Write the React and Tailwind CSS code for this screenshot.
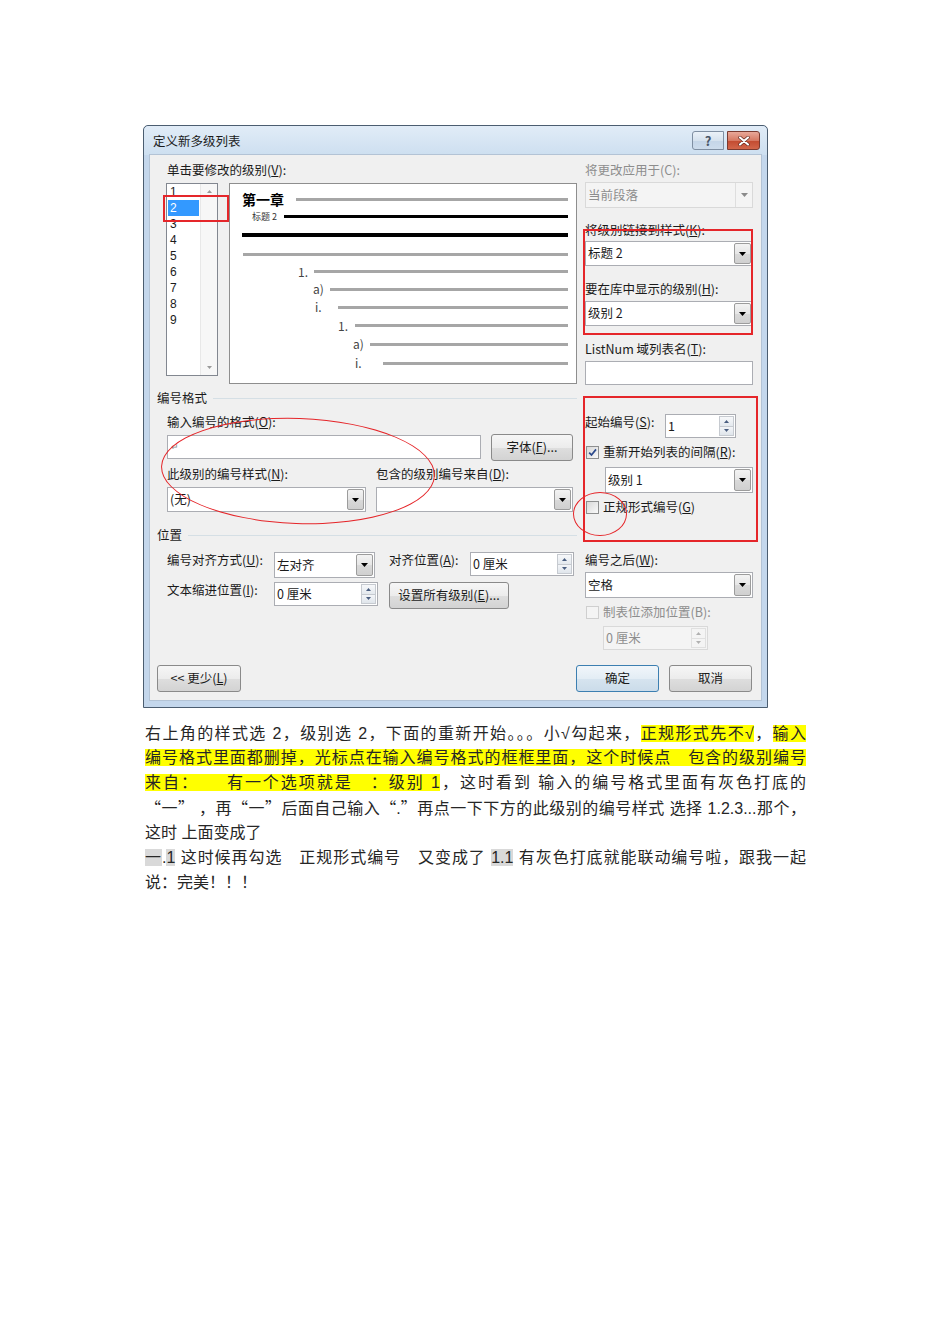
import React from 'react';

// 7-style dialog widgets
const DownArrow = ({ color = '#000' }) => (
  <svg width="7" height="4" viewBox="0 0 7 4">
    <path d="M0 0h7L3.5 4z" fill={color} />
  </svg>
);

const Tiny = ({ up, color = '#4a5e80' }) => (
  <svg width="5" height="3" viewBox="0 0 5 3">
    <path d={up ? 'M0 3h5L2.5 0z' : 'M0 0h5L2.5 3z'} fill={color} />
  </svg>
);

const Combo = ({ text, className = '', disabled = false }) => (
  <div
    className={`flex items-stretch border ${
      disabled ? 'border-[#d9d9d9] bg-[#f4f4f4] text-[#8d8d8d]' : 'border-[#abadb3] bg-white text-[#1b1b1b]'
    } ${className}`}
  >
    <div className="flex flex-1 items-center pl-[2px]">{text}</div>
    {disabled ? (
      <div className="flex w-[17px] items-center justify-center border-l border-[#dedede]">
        <DownArrow color="#8a8a8a" />
      </div>
    ) : (
      <div className="m-px flex w-[17px] items-center justify-center rounded-[2px] border border-[#9c9c9c] bg-[linear-gradient(#f3f3f3,#e6e6e6_50%,#d9d9d9_51%,#d0d0d0)]">
        <DownArrow />
      </div>
    )}
  </div>
);

const Spin = ({ text, className = '', disabled = false }) => (
  <div
    className={`flex border ${
      disabled ? 'border-[#d9d9d9] bg-[#f4f4f4] text-[#8d8d8d]' : 'border-[#abadb3] bg-white text-[#1b1b1b]'
    } ${className}`}
  >
    <div className="flex flex-1 items-center pl-[2px]">{text}</div>
    <div className="my-px mr-px flex w-[15px] flex-col">
      <div
        className={`flex flex-1 items-center justify-center border ${
          disabled ? 'border-[#e0e0e0] bg-[#f4f4f4]' : 'border-[#c6cad0] bg-[linear-gradient(#f7f8fa,#e4e9ee)]'
        }`}
      >
        <Tiny up color={disabled ? '#b0b0b0' : '#4a5e80'} />
      </div>
      <div
        className={`flex flex-1 items-center justify-center border border-t-0 ${
          disabled ? 'border-[#e0e0e0] bg-[#f4f4f4]' : 'border-[#c6cad0] bg-[linear-gradient(#f3f5f8,#dfe5eb)]'
        }`}
      >
        <Tiny color={disabled ? '#b0b0b0' : '#4a5e80'} />
      </div>
    </div>
  </div>
);

const Btn = ({ children, className = '', primary = false }) => (
  <div
    className={`flex items-center justify-center rounded-[3px] border ${
      primary
        ? 'border-[#3c7fb1] bg-[linear-gradient(#f1f6fa,#e3edf5_50%,#d6e4ef_51%,#cbdcea)]'
        : 'border-[#8a8a8a] bg-[linear-gradient(#f6f6f6,#ececec_50%,#dedede_51%,#d3d3d3)]'
    } ${className}`}
  >
    {children}
  </div>
);

const Check = ({ checked = false, disabled = false }) => (
  <div
    className={`flex h-[13px] w-[13px] items-center justify-center border ${
      disabled ? 'border-[#cfcfcf] bg-[#f4f4f4]' : 'border-[#8e8f8f] bg-[linear-gradient(135deg,#d8d8d8,#f9f9f9)]'
    }`}
  >
    {checked && (
      <svg width="9" height="9" viewBox="0 0 9 9">
        <path d="M1.2 4.6l2.3 2.4L8 1.4" stroke="#2c4a8c" strokeWidth="1.7" fill="none" />
      </svg>
    )}
  </div>
);

const Heading = ({ children }) => (
  <div className="flex h-[16px] items-center">
    <span className="leading-[16px]">{children}</span>
    <div className="ml-[6px] h-px flex-1 bg-[#d5dfe5]" />
  </div>
);

const preview = [
  { h: 'h-[16px]', pl: 'pl-[12px]', w: 'w-[54px]', label: '第一章', lc: 'text-[14px] font-bold text-black', bar: 'h-[3px] bg-[#a6a6a6]' },
  { h: 'h-[18px]', pl: 'pl-[22px]', w: 'w-[32px]', label: '标题 2', lc: 'text-[9px] text-[#333]', bar: 'h-[3px] bg-black' },
  { h: 'h-[20px]', pl: 'pl-[12px]', w: '', label: '', lc: '', bar: 'h-[4px] bg-black' },
  { h: 'h-[18px]', pl: 'pl-[13px]', w: '', label: '', lc: '', bar: 'h-[3px] bg-[#a6a6a6]' },
  { h: 'h-[17px]', pl: 'pl-[68px]', w: 'w-[16px]', label: '1.', lc: 'text-[12px] text-[#444]', bar: 'h-[3px] bg-[#a6a6a6]' },
  { h: 'h-[18px]', pl: 'pl-[83px]', w: 'w-[17px]', label: 'a)', lc: 'text-[12px] text-[#444]', bar: 'h-[3px] bg-[#a6a6a6]' },
  { h: 'h-[18px]', pl: 'pl-[85px]', w: 'w-[23px]', label: 'i.', lc: 'text-[12px] text-[#444]', bar: 'h-[3px] bg-[#a6a6a6]' },
  { h: 'h-[19px]', pl: 'pl-[108px]', w: 'w-[17px]', label: '1.', lc: 'text-[12px] text-[#444]', bar: 'h-[3px] bg-[#a6a6a6]' },
  { h: 'h-[18px]', pl: 'pl-[123px]', w: 'w-[17px]', label: 'a)', lc: 'text-[12px] text-[#444]', bar: 'h-[3px] bg-[#a6a6a6]' },
  { h: 'h-[20px]', pl: 'pl-[125px]', w: 'w-[28px]', label: 'i.', lc: 'text-[12px] text-[#444]', bar: 'h-[3px] bg-[#a6a6a6]' },
];

const Dialog = () => (
  <div className="relative ml-[143px] w-[625px] rounded-t-[5px] border border-[#4b5d70] bg-[#c4d7ec] pb-[7px] text-[12.5px] text-[#1b1b1b] [font-family:'Noto_Sans_CJK_SC',sans-serif]">
    {/* title bar */}
    <div className="flex h-[29px] items-start justify-between rounded-t-[5px] bg-[linear-gradient(#e1ecf7,#cddff0)]">
      <div className="pl-[9px] pt-[7px] leading-[16px]">定义新多级列表</div>
      <div className="flex pr-[7px] pt-[5px]">
        <div className="flex h-[19px] w-[32px] items-center justify-center rounded-l-[3px] border border-[#7f8fa2] bg-[linear-gradient(#eaf1f8,#d6e2ee_50%,#c4d5e7_51%,#cddcec)] text-[13px] font-bold leading-none text-[#4a5668]">
          ?
        </div>
        <div className="ml-[3px] flex h-[19px] w-[33px] items-center justify-center rounded-r-[3px] border border-[#7a3a30] bg-[linear-gradient(#e9a899,#d67963_50%,#c24a30_51%,#d2664a)]">
          <svg width="12" height="10" viewBox="0 0 12 10">
            <path d="M2 1.5l8 7M10 1.5l-8 7" stroke="#5a2018" strokeWidth="3.4" strokeLinecap="round" />
            <path d="M2 1.5l8 7M10 1.5l-8 7" stroke="#fff" strokeWidth="2.2" strokeLinecap="round" />
          </svg>
        </div>
      </div>
    </div>

    {/* body */}
    <div className="mx-[6px] bg-[#f0f0f0] pb-[8px] shadow-[0_0_0_1px_#b3c3d5]">
      <div className="flex items-start pt-[7px]">
        {/* left column */}
        <div className="w-[427px] pl-[7px]">
          <div className="ml-[10px] h-[16px] leading-[16px]">
            单击要修改的级别(<u>V</u>):
          </div>
          <div className="ml-[9px] mt-[5px] flex items-start">
            <div className="flex h-[193px] w-[52px] border border-[#828790] bg-white">
              <div className="flex-1 text-[12px] [font-family:'Liberation_Sans',sans-serif]">
                {[1, 2, 3, 4, 5, 6, 7, 8, 9].map((n) => (
                  <div
                    key={n}
                    className={`mx-px h-[16px] pl-[2px] leading-[16px] ${n === 2 ? 'bg-[#3399ff] text-white' : ''}`}
                  >
                    {n}
                  </div>
                ))}
              </div>
              <div className="flex w-[17px] flex-col items-center justify-between border-l border-[#e8e8e8] bg-[#f7f7f7] py-[6px]">
                <Tiny up color="#9a9a9a" />
                <Tiny color="#9a9a9a" />
              </div>
            </div>
            <div className="ml-[11px] h-[201px] w-[348px] border border-[#8e8e8e] bg-white pr-[8px] pt-[7px]">
              {preview.map((r, i) => (
                <div key={i} className={`flex items-center ${r.h} ${r.pl}`}>
                  {r.label && <span className={`shrink-0 leading-none ${r.w} ${r.lc}`}>{r.label}</span>}
                  <div className={`flex-1 ${r.bar}`} />
                </div>
              ))}
            </div>
          </div>

          <div className="mt-[6px]">
            <Heading>编号格式</Heading>
          </div>
          <div className="ml-[10px] mt-[8px] h-[16px] leading-[16px]">
            输入编号的格式(<u>O</u>):
          </div>
          <div className="ml-[10px] mt-[4px] flex items-start">
            <div className="mt-px flex h-[24px] w-[314px] items-center border border-[#abadb3] bg-white pl-[3px] text-[9px] text-[#8a8a8a]">
              ↵
            </div>
            <Btn className="ml-[10px] h-[27px] w-[82px]">
              字体(<u>F</u>)...
            </Btn>
          </div>
          <div className="ml-[10px] mt-[5px] flex h-[16px] leading-[16px]">
            <div className="w-[209px]">
              此级别的编号样式(<u>N</u>):
            </div>
            <div>
              包含的级别编号来自(<u>D</u>):
            </div>
          </div>
          <div className="ml-[10px] mt-[5px] flex">
            <Combo text="(无)" className="h-[25px] w-[199px]" />
            <Combo text="" className="ml-[10px] h-[25px] w-[197px]" />
          </div>

          <div className="mt-[15px]">
            <Heading>位置</Heading>
          </div>
          <div className="ml-[10px] mt-[9px] flex items-start">
            <div className="w-[107px] leading-[16px]">
              编号对齐方式(<u>U</u>):
            </div>
            <Combo text="左对齐" className="h-[26px] w-[101px]" />
            <div className="ml-[14px] w-[81px] leading-[16px]">
              对齐位置(<u>A</u>):
            </div>
            <Spin text="0 厘米" className="h-[24px] w-[104px]" />
          </div>
          <div className="ml-[10px] mt-[4px] flex items-start">
            <div className="w-[107px] leading-[16px]">
              文本缩进位置(<u>I</u>):
            </div>
            <Spin text="0 厘米" className="h-[24px] w-[104px]" />
            <Btn className="ml-[11px] h-[27px] w-[120px]">
              设置所有级别(<u>E</u>)...
            </Btn>
          </div>
        </div>

        {/* right column */}
        <div className="ml-[8px] w-[168px]">
          <div className="h-[16px] leading-[16px] text-[#8d8d8d]">将更改应用于(C):</div>
          <Combo disabled text="当前段落" className="mt-[4px] h-[26px]" />
          <div className="mt-[14px] h-[16px] leading-[16px]">
            将级别链接到样式(<u>K</u>):
          </div>
          <Combo text="标题 2" className="mt-[3px] h-[25px]" />
          <div className="mt-[15px] h-[16px] leading-[16px]">
            要在库中显示的级别(<u>H</u>):
          </div>
          <Combo text="级别 2" className="mt-[4px] h-[25px]" />
          <div className="mt-[15px] h-[16px] leading-[16px]">
            ListNum 域列表名(<u>T</u>):
          </div>
          <div className="mt-[4px] h-[24px] border border-[#abadb3] bg-white" />

          <div className="mt-[29px] flex items-start">
            <div className="w-[80px] leading-[16px]">
              起始编号(<u>S</u>):
            </div>
            <Spin text="1" className="h-[24px] w-[71px]" />
          </div>
          <div className="mt-[6px] flex h-[16px] items-center pl-px">
            <Check checked />
            <span className="ml-[4px]">
              重新开始列表的间隔(<u>R</u>):
            </span>
          </div>
          <Combo text="级别 1" className="ml-[20px] mt-[7px] h-[26px]" />
          <div className="mt-[6px] flex h-[16px] items-center pl-px">
            <Check />
            <span className="ml-[4px]">
              正规形式编号(<u>G</u>)
            </span>
          </div>

          <div className="mt-[37px] h-[16px] leading-[16px]">
            编号之后(<u>W</u>):
          </div>
          <Combo text="空格" className="mt-[4px] h-[26px]" />
          <div className="mt-[6px] flex h-[16px] items-center pl-px text-[#8d8d8d]">
            <Check disabled />
            <span className="ml-[4px]">制表位添加位置(B):</span>
          </div>
          <Spin disabled text="0 厘米" className="ml-[18px] mt-[6px] h-[24px] w-[105px]" />
        </div>
      </div>

      {/* buttons */}
      <div className="mt-[15px] flex pl-[7px] pr-[9px]">
        <Btn className="h-[27px] w-[84px]">
          &lt;&lt; 更少(<u>L</u>)
        </Btn>
        <div className="flex-1" />
        <Btn primary className="h-[27px] w-[83px]">
          确定
        </Btn>
        <Btn className="ml-[10px] h-[27px] w-[83px]">取消</Btn>
      </div>
    </div>

    {/* red annotations drawn over the screenshot */}
    <div className="pointer-events-none absolute left-[19px] top-[69px] h-[27px] w-[66px] border-2 border-[#e5262a]" />
    <div className="pointer-events-none absolute left-[439px] top-[103px] h-[106px] w-[170px] border-2 border-[#e5262a]" />
    <div className="pointer-events-none absolute left-[439px] top-[270px] h-[146px] w-[175px] border-2 border-[#e5262a]" />
    <div className="pointer-events-none absolute left-[17px] top-[292px] h-[106px] w-[274px] rotate-[2deg] rounded-[50%] border-[1.5px] border-[#e5262a]" />
    <div className="pointer-events-none absolute left-[429px] top-[366px] h-[44px] w-[54px] rounded-[50%] border-[1.5px] border-[#e5262a]" />
  </div>
);

const Y = ({ children }) => <span className="bg-[#ffff00]">{children}</span>;
const G = ({ children }) => <span className="bg-[#d9d9d9]">{children}</span>;
const Q = ({ children }) => <span className="[font-family:'Noto_Sans_CJK_SC',sans-serif]">{children}</span>;

const full = 'h-[25px] text-justify [text-align-last:justify]';

export default function App() {
  return (
    <div className="min-h-[1344px] bg-white pt-[125px]">
      <Dialog />

      <div className="ml-[145px] mt-[12px] w-[661px] text-[16px] leading-[25px] text-[#262626] [font-family:'Liberation_Sans','Noto_Sans_CJK_SC',sans-serif]">
        <div className={full}>
          右上角的样式选 2，级别选 2，下面的重新开始<Q>。。。</Q>小√勾起来，<Y>正规形式先不√</Y>，<Y>输入</Y>
        </div>
        <div className={full}>
          <Y>编号格式里面都删掉，光标点在输入编号格式的框框里面，这个时候点{'\u3000'}包含的级别编号</Y>
        </div>
        <div className={full}>
          <Y>来自：{'\u3000\u3000'}有一个选项就是{'\u3000'}：级别 1</Y>，这时看到 输入的编号格式里面有灰色打底的
        </div>
        <div className={full}>
          <Q>“一”</Q> ，再<Q>“一”</Q>后面自己输入<Q>“</Q>.<Q>”</Q>再点一下下方的此级别的编号样式 选择 1.2.3...那个，
        </div>
        <div className="h-[25px]">这时 上面变成了</div>
        <div className={full}>
          <G>一</G>.<G>1</G> 这时候再勾选{'\u3000'}正规形式编号{'\u3000'}又变成了 <G>1.1</G> 有灰色打底就能联动编号啦，跟我一起
        </div>
        <div className="h-[25px]">说：完美！！！</div>
      </div>
    </div>
  );
}
